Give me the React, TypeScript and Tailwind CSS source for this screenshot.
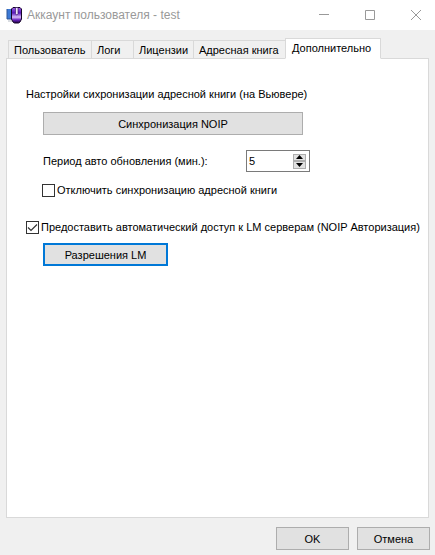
import React, { useState } from 'react';
import clsx from 'clsx';

const TABS = [
  { id: 'user', label: 'Пользователь', width: 'w-[84px]' },
  { id: 'logs', label: 'Логи', width: 'w-[43px]' },
  { id: 'licenses', label: 'Лицензии', width: 'w-[61px]' },
  { id: 'book', label: 'Адресная книга', width: 'w-[93px]' },
  { id: 'extra', label: 'Дополнительно', width: 'w-[96px]' },
];

function AppIcon() {
  return (
    <svg width="16" height="18" viewBox="0 0 16 18" aria-hidden="true">
      <defs>
        <linearGradient id="mouse" x1="0" y1="0" x2="0" y2="1">
          <stop offset="0" stopColor="#9a5ee6" />
          <stop offset="0.35" stopColor="#5a18b8" />
          <stop offset="0.62" stopColor="#d9bcf8" />
          <stop offset="0.8" stopColor="#6a20c0" />
          <stop offset="1" stopColor="#1c0540" />
        </linearGradient>
      </defs>
      <path d="M1 3h6v10H1z" fill="#3c7ad6" />
      <path d="M1 3v10h5" fill="none" stroke="#2c5596" />
      <path d="M2 15h4" stroke="#b3bac4" />
      <path
        d="M7 1.500h7l1.500 1.500v10l-1.500 3-1.500 1h-4l-1.500-1-1.500-3V3z"
        fill="url(#mouse)"
        stroke="#160428"
      />
      <path d="M9.500 1.500v6l1 1.500h.5l1-1.500v-6z" fill="#efe4fb" stroke="#2a0a55" strokeWidth="0.6" />
    </svg>
  );
}

function TitleBar() {
  return (
    <header className="flex h-[30px] shrink-0 items-center bg-white pl-[6px]">
      <AppIcon />
      <h1 className="flex-1 whitespace-nowrap pl-[5px] text-[12px] leading-4 text-[#999999]">
        Аккаунт пользователя - test
      </h1>
      <div className="flex h-full">
        <button type="button" aria-label="Свернуть" className="flex w-[46px] items-center justify-center">
          <svg width="10" height="10" viewBox="0 0 10 10">
            <path d="M0 4.500h10" stroke="#999999" />
          </svg>
        </button>
        <button type="button" aria-label="Развернуть" className="flex w-[46px] items-center justify-center">
          <svg width="10" height="10" viewBox="0 0 10 10">
            <path d="M.5.5h9v9h-9z" fill="none" stroke="#999999" />
          </svg>
        </button>
        <button type="button" aria-label="Закрыть" className="flex w-[42px] items-center justify-center pl-1">
          <svg width="10" height="10" viewBox="0 0 10 10">
            <path d="M0 0l10 10M10 0L0 10" stroke="#999999" />
          </svg>
        </button>
      </div>
    </header>
  );
}

type ButtonProps = {
  children: React.ReactNode;
  className?: string;
  focused?: boolean;
};

function Button({ children, className, focused }: ButtonProps) {
  return (
    <button
      type="button"
      className={clsx(
        'flex h-[23px] items-center justify-center whitespace-nowrap bg-[#e1e1e1]',
        focused ? 'border-2 border-[#0078d7]' : 'border border-[#adadad]',
        className,
      )}
    >
      {children}
    </button>
  );
}

type CheckboxProps = {
  label: string;
  checked: boolean;
  onChange: (value: boolean) => void;
  className?: string;
};

function Checkbox({ label, checked, onChange, className }: CheckboxProps) {
  return (
    <label className={clsx('flex h-4 items-center gap-[2px] whitespace-nowrap', className)}>
      <span className="relative flex size-[13px] shrink-0">
        <input
          type="checkbox"
          checked={checked}
          onChange={(e) => onChange(e.target.checked)}
          className="size-[13px] appearance-none border border-[#333333] bg-white"
        />
        {checked && (
          <svg className="pointer-events-none absolute inset-0" width="13" height="13" viewBox="0 0 13 13">
            <path d="M2 6.500l3 3 6-6" fill="none" stroke="#333333" strokeWidth="1.200" />
          </svg>
        )}
      </span>
      {label}
    </label>
  );
}

export default function App() {
  const [activeTab, setActiveTab] = useState('extra');
  const [period, setPeriod] = useState(5);
  const [syncOff, setSyncOff] = useState(false);
  const [lmAccess, setLmAccess] = useState(true);

  return (
    <div className="flex min-h-screen flex-col bg-[#f0f0f0] font-['Liberation_Sans',Arial,sans-serif] text-[11px] leading-4 text-black">
      <TitleBar />

      <main className="flex flex-1 flex-col px-[6px] pt-2">
        {/* Tabs overlap the panel border by one pixel */}
        <div role="tablist" className="z-10 -mb-px flex h-[21px] items-end pl-[2px]">
          {TABS.map((tab) => {
            const active = tab.id === activeTab;
            return (
              <button
                key={tab.id}
                type="button"
                role="tab"
                aria-selected={active}
                onClick={() => setActiveTab(tab.id)}
                className={clsx(
                  '-mr-px flex shrink-0 whitespace-nowrap border border-[#d9d9d9] pt-px',
                  tab.width,
                  active ? 'h-[21px] border-b-white bg-white pl-[6px]' : 'h-[19px] bg-[#f0f0f0] pl-[5px]',
                )}
              >
                {tab.label}
              </button>
            );
          })}
        </div>

        <section role="tabpanel" className="flex-1 border border-[#d9d9d9] bg-white pl-[19px] pt-[27px]">
          <p className="whitespace-nowrap">Настройки сихронизации адресной книги (на Вьювере)</p>
          <div className="pl-[17px]">
            <Button className="mt-[10px] w-[260px]">Синхронизация NOIP</Button>
            <div className="mt-[15px] flex h-[22px] items-center">
              <label htmlFor="period" className="w-[203px] whitespace-nowrap">
                Период авто обновления (мин.):
              </label>
              <div className="flex h-[22px] w-16 items-center border border-[#7a7a7a] bg-white pr-[3px]">
                <input
                  id="period"
                  type="text"
                  inputMode="numeric"
                  value={period}
                  onChange={(e) => setPeriod(Number(e.target.value) || 0)}
                  className="min-w-0 flex-1 pl-[2px] outline-none"
                />
                <div className="flex flex-col">
                  <button
                    type="button"
                    aria-label="Увеличить"
                    onClick={() => setPeriod(period + 1)}
                    className="flex h-[7px] w-[13px] items-center justify-center border border-[#adadad] bg-[#e1e1e1]"
                  >
                    <svg width="7" height="4" viewBox="0 0 7 4">
                      <path d="M3.500 0L7 4H0z" />
                    </svg>
                  </button>
                  <button
                    type="button"
                    aria-label="Уменьшить"
                    onClick={() => setPeriod(Math.max(0, period - 1))}
                    className="flex h-2 w-[13px] items-center justify-center border border-[#adadad] bg-[#e1e1e1]"
                  >
                    <svg width="7" height="4" viewBox="0 0 7 4">
                      <path d="M0 0h7L3.500 4z" />
                    </svg>
                  </button>
                </div>
              </div>
            </div>
          </div>
          <Checkbox
            className="ml-4 mt-[10px]"
            label="Отключить синхронизацию адресной книги"
            checked={syncOff}
            onChange={setSyncOff}
          />
          <Checkbox
            className="mt-[21px]"
            label="Предоставить автоматический доступ к LM серверам (NOIP Авторизация)"
            checked={lmAccess}
            onChange={setLmAccess}
          />
          <Button focused className="ml-[17px] mt-2 w-[125px]">
            Разрешения LM
          </Button>
        </section>
      </main>

      <footer className="flex justify-end gap-2 pb-[5px] pr-[5px] pt-[9px]">
        <Button className="w-[73px]">OK</Button>
        <Button className="w-[73px]">Отмена</Button>
      </footer>
    </div>
  );
}
